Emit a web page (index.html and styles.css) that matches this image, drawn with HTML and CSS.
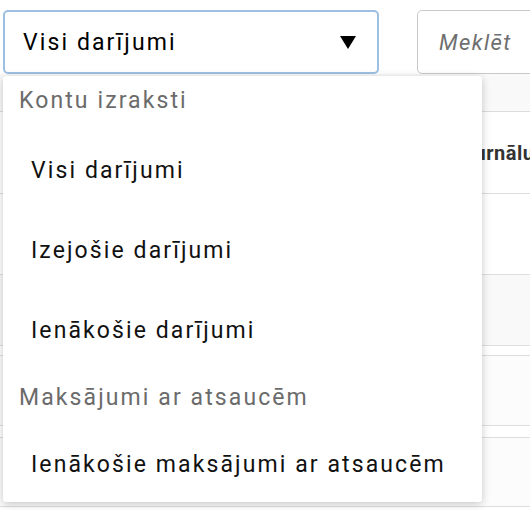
FILE: index.html
```html
<!DOCTYPE html>
<html lang="lv">
<head>
<meta charset="utf-8">
<link rel="stylesheet" href="styles.css">
</head>
<body>
<div class="page">
  <div class="toolbar">
    <div class="select">
      <span class="select-value">Visi darījumi</span>
      <svg class="caret" width="16" height="13" viewBox="0 0 16 13"><polygon points="0,0 16,0 8,13" fill="#000"/></svg>
    </div>
    <div class="search"><span class="placeholder">Meklēt</span></div>
  </div>
  <div class="table">
    <div class="row row-top"></div>
    <div class="row row-head"><span class="head-text">Žurnālu</span></div>
    <div class="row row-a"></div>
    <div class="row row-b"></div>
    <div class="row row-gap"></div>
    <div class="row row-c"></div>
    <div class="row row-gap2"></div>
    <div class="row row-d"></div>
  </div>
  <div class="menu">
    <div class="group group-first">Kontu izraksti</div>
    <div class="item">Visi darījumi</div>
    <div class="item">Izejošie darījumi</div>
    <div class="item">Ienākošie darījumi</div>
    <div class="group">Maksājumi ar atsaucēm</div>
    <div class="item">Ienākošie maksājumi ar atsaucēm</div>
  </div>
</div>
</body>
</html>
```
FILE: styles.css
```css
html, body {
  margin: 0;
  padding: 0;
  background: #fff;
  overflow: hidden;
}
.page {
  position: relative;
  width: 530px;
  height: 510px;
  font-family: Roboto, "Noto Sans", sans-serif;
  overflow: hidden;
}
.toolbar {
  display: flex;
  align-items: flex-start;
  padding: 10px 0 0 3px;
  gap: 38px;
}
.select {
  box-sizing: border-box;
  width: 376px;
  height: 64px;
  flex-shrink: 0;
  border: 2px solid #9dc0e2;
  border-radius: 5px;
  display: flex;
  align-items: center;
  justify-content: space-between;
  padding: 0 21px 0 18px;
}
.select-value {
  font-size: 23px;
  letter-spacing: 2.1px;
  color: #000;
}
.caret {
  display: block;
}
.search {
  box-sizing: border-box;
  width: 140px;
  height: 64px;
  border: 1px solid #c9c9c9;
  border-radius: 5px;
  display: flex;
  align-items: center;
  padding-left: 21px;
  flex-shrink: 0;
}
.placeholder {
  font-style: italic;
  font-size: 22px;
  letter-spacing: 1.4px;
  color: #6f6f6f;
}
.table {
  display: flex;
  flex-direction: column;
}
.row {
  border-bottom: 1px solid #dedede;
  box-sizing: border-box;
}
.row-top { height: 38px; background: #f9f9f9; border-bottom-color: #dcdcdc; }
.row-head {
  height: 82px;
  display: flex;
  align-items: center;
  padding-left: 462px;
}
.head-text {
  font-weight: 700;
  font-size: 20px;
  color: #333;
  letter-spacing: 0.5px;
}
.row-a { height: 81px; }
.row-b { height: 71px; background: #f9f9f9; }
.row-gap { height: 10px; }
.row-c { height: 70px; background: #fcfcfc; }
.row-gap2 { height: 12px; }
.row-d { height: 69px; background: #fcfcfc; }
.menu {
  position: absolute;
  left: 3px;
  top: 76px;
  width: 479px;
  background: #fff;
  border-radius: 3px;
  box-shadow: 0 2px 8px rgba(0, 0, 0, 0.22);
  font-size: 23px;
  letter-spacing: 2.1px;
}
.group {
  height: 54px;
  line-height: 54px;
  padding-left: 16px;
  color: #6b6b6b;
}
.group-first {
  height: 55px;
  line-height: 50px;
}
.item {
  height: 80px;
  line-height: 80px;
  padding-left: 28px;
  color: #111;
}
.item:last-child {
  height: 77px;
  line-height: 80px;
}
```
